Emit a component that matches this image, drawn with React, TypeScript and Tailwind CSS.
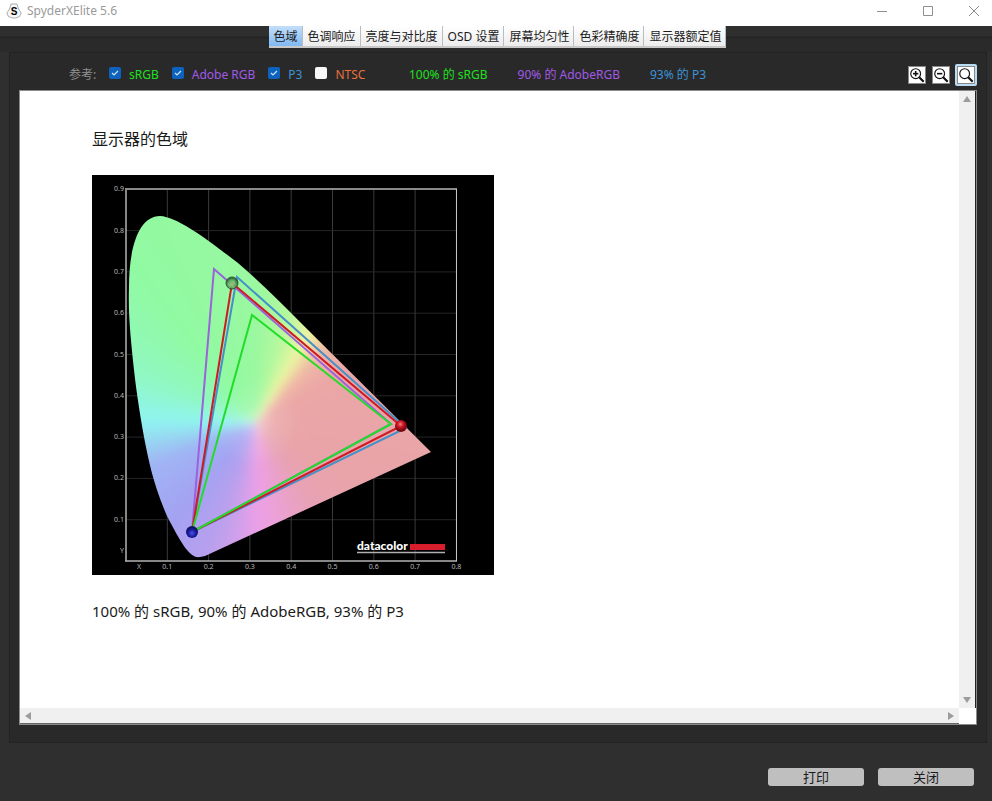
import { useState } from "react";

const tabs = ["色域", "色调响应", "亮度与对比度", "OSD 设置", "屏幕均匀性", "色彩精确度", "显示器额定值"];

const references = [
  { id: "srgb", label: "sRGB", color: "text-[#1fe01f]", checked: true },
  { id: "adobe", label: "Adobe RGB", color: "text-[#a259e6]", checked: true },
  { id: "p3", label: "P3", color: "text-[#3c94d8]", checked: true },
  { id: "ntsc", label: "NTSC", color: "text-[#e8703c]", checked: false },
];

const results = [
  { label: "100% 的 sRGB", color: "text-[#1fe01f]" },
  { label: "90% 的 AdobeRGB", color: "text-[#a259e6]" },
  { label: "93% 的 P3", color: "text-[#3c94d8]" },
];

// chart space: 0.1 = 41.3px, origin at (34, 386)
const px = (x: number) => 34 + x * 413;
const py = (y: number) => 386 - y * 413;

const LOCUS =
  "M108 382 C98 384 89 368 75 341 C62 311 57 288 52 262 C47 234 44 213 42 195 C39 166 36 140 37 112 C37 72 47 41 68 41 C86 42 116 65 146 88 C168 107 187 126 208 147 L339 277 L113 381 Z";

function TitleBar() {
  return (
    <header className="flex h-[26px] items-center bg-white pl-[6px] text-[#9a9a9a]">
      <svg viewBox="0 0 16 16" className="mb-1 size-4">
        <path
          d="M5 1h6l1.500 5L15.200 10l-1.700 3.600L9.500 15h-3l-4-1.400L.8 10l2.700-4z"
          fill="#f6f6f6"
          stroke="#9a9a9a"
          strokeWidth="0.800"
        />
        <text x="8" y="11.500" textAnchor="middle" className="fill-black font-['Liberation_Sans'] text-[10px] font-bold">
          S
        </text>
      </svg>
      <h1 className="mb-1 ml-[5px] flex-1 text-[12px] leading-4">SpyderXElite 5.6</h1>
      <div className="mb-1 flex items-center gap-[34px] pr-3">
        <button aria-label="Minimize">
          <svg viewBox="0 0 12 12" className="size-3" fill="none" stroke="#8f8f8f">
            <path d="M1 6.500h10" />
          </svg>
        </button>
        <button aria-label="Maximize">
          <svg viewBox="0 0 12 12" className="size-3" fill="none" stroke="#8f8f8f">
            <path d="M1.500 1.500h9v9h-9z" />
          </svg>
        </button>
        <button aria-label="Close">
          <svg viewBox="0 0 12 12" className="size-3" fill="none" stroke="#8f8f8f">
            <path d="M1 1l10 10M11 1L1 11" />
          </svg>
        </button>
      </div>
    </header>
  );
}

function TabBar() {
  const [active, setActive] = useState(0);
  return (
    <nav className="flex h-[22px] justify-center pl-[3px]">
      <div role="tablist" className="flex border-b-2 border-[#c8c8c8]">
        {tabs.map((tab, i) => (
          <button
            key={tab}
            role="tab"
            aria-selected={i === active}
            onClick={() => setActive(i)}
            className={`border-r border-[#b9bdc2] pr-1 pl-[5px] text-[12px] leading-[22px] whitespace-nowrap text-[#1c1c1c] ${
              i === active ? "bg-linear-to-b from-[#c3defa] to-[#7fb9f3]" : "bg-linear-to-b from-white to-[#ececec]"
            }`}
          >
            {tab}
          </button>
        ))}
      </div>
    </nav>
  );
}

function ZoomIcon({ sign }: { sign?: "in" | "out" }) {
  return (
    <svg viewBox="0 0 18 18" className="size-[18px] border border-[#888] bg-white" fill="none" stroke="#111">
      <circle cx="7.500" cy="7.500" r="5.500" strokeWidth="1.300" />
      <path d="M11.500 11.500l5 5" strokeWidth="2.400" />
      {sign && <path d="M4.500 7.500h6" strokeWidth="1.800" />}
      {sign === "in" && <path d="M7.500 4.500v6" strokeWidth="1.800" />}
    </svg>
  );
}

function Toolbar() {
  return (
    <div className="flex h-[30px] items-center pl-[50px] text-[12px]">
      <span className="w-10 shrink-0 text-[#8f8f8f]">参考:</span>
      <div className="flex w-[300px] shrink-0 items-center gap-[13px]">
        {references.map((r) => (
          <div key={r.id} className="flex shrink-0 items-center gap-2">
            <span className="relative mb-1 flex size-3">
              <input
                id={r.id}
                type="checkbox"
                defaultChecked={r.checked}
                className="peer size-3 appearance-none rounded-[2px] bg-[#f7f7f7] checked:bg-[#0c62bd]"
              />
              <svg
                viewBox="0 0 12 12"
                className="pointer-events-none absolute inset-0 hidden size-3 peer-checked:block"
                fill="none"
                stroke="#cfe4fa"
                strokeWidth="1.200"
              >
                <path d="M3 6l2 2 4-4" />
              </svg>
            </span>
            <label htmlFor={r.id} className={r.color}>
              {r.label}
            </label>
          </div>
        ))}
      </div>
      <div className="flex flex-1 gap-[30px]">
        {results.map((r) => (
          <span key={r.label} className={`whitespace-nowrap ${r.color}`}>
            {r.label}
          </span>
        ))}
      </div>
      <div className="flex items-center gap-1">
        <button aria-label="Zoom in" className="px-px">
          <ZoomIcon sign="in" />
        </button>
        <button aria-label="Zoom out" className="px-px">
          <ZoomIcon sign="out" />
        </button>
        <button aria-label="Fit" className="rounded-[2px] bg-[#b9dcf5] p-[2px]">
          <ZoomIcon />
        </button>
      </div>
    </div>
  );
}

function GamutChart() {
  const steps = [1, 2, 3, 4, 5, 6, 7, 8];
  return (
    <svg viewBox="0 0 402 400" className="h-auto w-[402px] max-w-full bg-black" fill="none">
      <defs>
        <clipPath id="locus">
          <path d={LOCUS} />
        </clipPath>
        <radialGradient id="ballGreen" cx="50%" cy="60%">
          <stop offset="0" stopColor="#9be696" />
          <stop offset="0.600" stopColor="#5fb060" />
          <stop offset="1" stopColor="#2a5c2c" />
        </radialGradient>
        <radialGradient id="ballRed" cx="45%" cy="35%">
          <stop offset="0" stopColor="#f08080" />
          <stop offset="0.500" stopColor="#d01424" />
          <stop offset="1" stopColor="#7a0a12" />
        </radialGradient>
        <radialGradient id="ballBlue" cx="50%" cy="60%">
          <stop offset="0" stopColor="#4a55e0" />
          <stop offset="0.600" stopColor="#1c1ca4" />
          <stop offset="1" stopColor="#10105c" />
        </radialGradient>
      </defs>

      {/* Grid */}
      {steps.map((n) => (
        <g key={n} strokeWidth="1">
          <path d={`M${px(n / 10)} 14V386`} stroke="#3a3a3a" />
          <path d={`M34 ${py(n / 10)}H364`} stroke="#262626" />
        </g>
      ))}

      {/* Spectral locus */}
      <g clipPath="url(#locus)">
        <foreignObject x="0" y="0" width="402" height="400">
          <div className="h-[400px] w-[402px] bg-[radial-gradient(circle_at_164px_248px,rgba(255,245,250,0.5),rgba(255,245,250,0.15)_18px,rgba(255,245,250,0)_44px),conic-gradient(from_0deg_at_164px_248px,#9af8a0_0deg,#b4f89e_16deg,#eef4a2_31deg,#efb8a6_43deg,#eba6a6_60deg,#e8a4a8_120deg,#e8a2b4_145deg,#eda0e6_178deg,#b8a0ee_200deg,#a4a2f2_220deg,#a0b4f4_248deg,#90f4f0_271deg,#90f8c0_294deg,#90faa2_322deg,#9af8a0_360deg)] blur-[4px]" />
        </foreignObject>
      </g>

      {/* Axes */}
      <path d="M34 13V386" stroke="#b4b4b4" strokeWidth="1.500" />
      <path d="M33 386H365" stroke="#b4b4b4" strokeWidth="1.500" />
      <path d="M33 14H365" stroke="#8a8a8a" strokeWidth="2" />
      <path d="M364.500 14V386" stroke="#c4c4c4" />

      <g className="fill-[#b8b8b8] font-['Noto_Sans'] text-[7px]">
        {[...steps, 9].map((n) => (
          <text key={n} x="32" y={py(n / 10) + 2} textAnchor="end">
            0.{n}
          </text>
        ))}
        {steps.map((n) => (
          <text key={n} x={px(n / 10)} y="394" textAnchor="middle">
            0.{n}
          </text>
        ))}
        <text x="28" y="378">Y</text>
        <text x="45" y="394">X</text>
      </g>

      {/* Gamut triangles */}
      <g strokeWidth="2">
        <path d="M145 102L314 253L100 357Z" stroke="#4690c8" />
        <path d="M122 94L299 249L100 357Z" stroke="#9b62dc" />
        <path d="M140 108L309 251L100 357Z" stroke="#cf1a26" />
        <path d="M160 140L299 249L100 357Z" stroke="#22dc2a" />
      </g>

      <circle cx="140" cy="108" r="6" fill="url(#ballGreen)" fillOpacity="0.850" stroke="#2c5a2e" />
      <circle cx="309" cy="251" r="6" fill="url(#ballRed)" />
      <circle cx="100" cy="357" r="6" fill="url(#ballBlue)" />

      {/* Brand */}
      <text x="265" y="375" className="fill-white font-['Lato'] text-[12px] font-black">
        datacolor
      </text>
      <path d="M318 369h35v6h-35z" fill="#d81e2c" />
      <path d="M265 377.500h88" stroke="#b0b0b0" strokeWidth="1.500" />
    </svg>
  );
}

function ScrollArrow({ dir, label }: { dir: string; label: string }) {
  return (
    <button aria-label={label} className="flex size-4 shrink-0 items-center justify-center">
      <svg viewBox="0 0 8 8" className={`size-2 ${dir}`} fill="#9c9c9c">
        <path d="M4 1l4 6H0z" />
      </svg>
    </button>
  );
}

function ReportView() {
  return (
    <div className="grid flex-1 grid-cols-[1fr_auto] grid-rows-[1fr_auto] border border-[#8a8a8a] bg-white">
      <article className="px-[72px] pt-9 text-[16px] leading-6 text-[#1a1a1a]">
        <h2>显示器的色域</h2>
        <figure className="mt-6">
          <GamutChart />
          <figcaption className="mt-6 text-[15px] leading-6">100% 的 sRGB, 90% 的 AdobeRGB, 93% 的 P3</figcaption>
        </figure>
      </article>
      <div className="flex flex-col justify-between border-r border-[#222] bg-[#f0f0f0]">
        <ScrollArrow dir="" label="Scroll up" />
        <ScrollArrow dir="rotate-180" label="Scroll down" />
      </div>
      <div className="flex h-4 justify-between border-b border-[#666] bg-[#f0f0f0]">
        <ScrollArrow dir="-rotate-90" label="Scroll left" />
        <ScrollArrow dir="rotate-90" label="Scroll right" />
      </div>
    </div>
  );
}

export default function App() {
  return (
    <div className="flex min-h-screen flex-col bg-[#2f2f2f] font-['Noto_Sans','Noto_Sans_CJK_SC',sans-serif]">
      <TitleBar />
      <div className="bg-[linear-gradient(to_bottom,#2f2f2f_10px,#222_11px,#2a2a2a_13px)]">
        <TabBar />
      </div>
      <div className="h-1 bg-[#2a2a2a]" />
      <main className="mr-[5px] ml-[9px] flex flex-1 flex-col border border-[#232323] bg-[#292929] px-[9px] pt-[7px] pb-[17px]">
        <Toolbar />
        <ReportView />
      </main>
      <footer className="flex justify-end gap-[14px] px-[18px] pt-[25px] pb-[15px]">
        <button className="h-[18px] w-24 rounded-[3px] bg-[#bfbfbf] text-[13px] leading-[18px] text-[#1a1a1a]">打印</button>
        <button className="h-[18px] w-24 rounded-[3px] bg-[#bfbfbf] text-[13px] leading-[18px] text-[#1a1a1a]">关闭</button>
      </footer>
    </div>
  );
}
